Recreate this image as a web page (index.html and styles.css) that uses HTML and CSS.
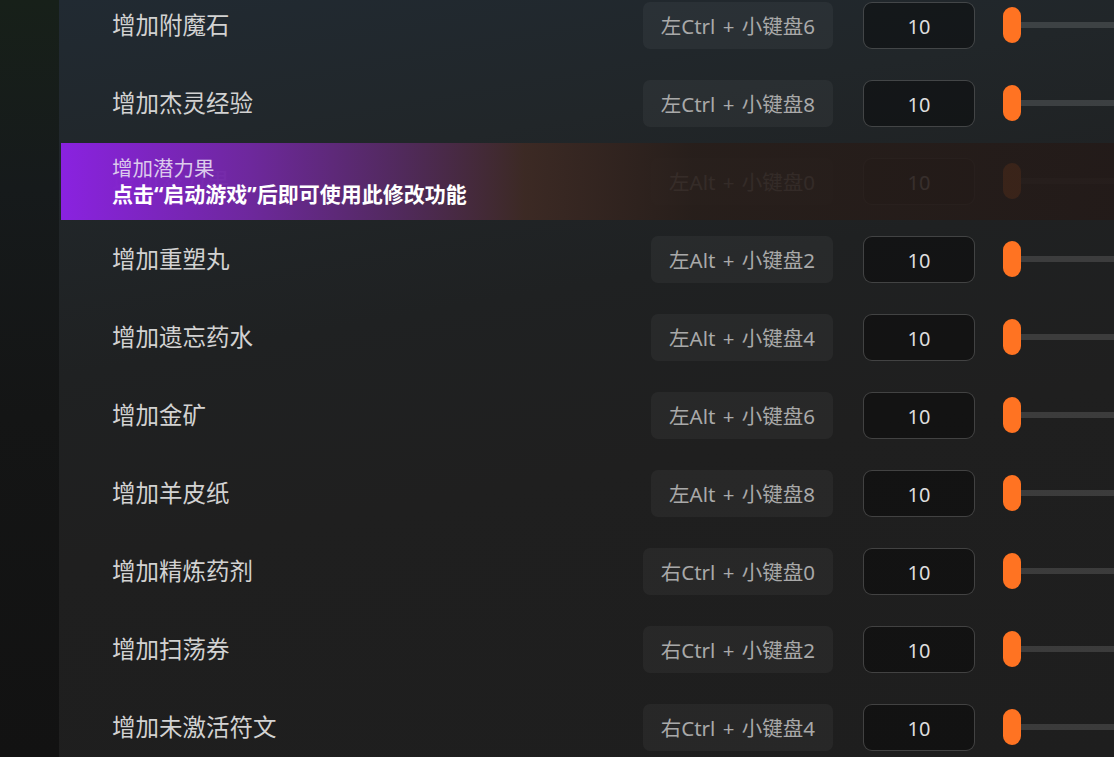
FILE: index.html
```html
<!DOCTYPE html>
<html lang="zh-CN">
<head>
<meta charset="utf-8">
<title>修改器</title>
<link rel="stylesheet" href="styles.css">
</head>
<body>
<div class="app">
  <div class="side"></div>
  <div class="panel">
    <div class="list">
      <div class="row">
        <div class="name">增加附魔石</div>
        <div class="hotkey">左Ctrl + 小键盘6</div>
        <div class="num">10</div>
        <div class="slider"><span class="thumb"></span><span class="track"></span></div>
      </div>
      <div class="row">
        <div class="name">增加杰灵经验</div>
        <div class="hotkey">左Ctrl + 小键盘8</div>
        <div class="num">10</div>
        <div class="slider"><span class="thumb"></span><span class="track"></span></div>
      </div>
      <div class="row">
        <div class="name">增加潜力果</div>
        <div class="hotkey">左Alt + 小键盘0</div>
        <div class="num">10</div>
        <div class="slider"><span class="thumb"></span><span class="track"></span></div>
        <div class="locked">
          <div class="locked-title">增加潜力果</div>
          <div class="locked-tip">点击“启动游戏”后即可使用此修改功能</div>
        </div>
      </div>
      <div class="row">
        <div class="name">增加重塑丸</div>
        <div class="hotkey">左Alt + 小键盘2</div>
        <div class="num">10</div>
        <div class="slider"><span class="thumb"></span><span class="track"></span></div>
      </div>
      <div class="row">
        <div class="name">增加遗忘药水</div>
        <div class="hotkey">左Alt + 小键盘4</div>
        <div class="num">10</div>
        <div class="slider"><span class="thumb"></span><span class="track"></span></div>
      </div>
      <div class="row">
        <div class="name">增加金矿</div>
        <div class="hotkey">左Alt + 小键盘6</div>
        <div class="num">10</div>
        <div class="slider"><span class="thumb"></span><span class="track"></span></div>
      </div>
      <div class="row">
        <div class="name">增加羊皮纸</div>
        <div class="hotkey">左Alt + 小键盘8</div>
        <div class="num">10</div>
        <div class="slider"><span class="thumb"></span><span class="track"></span></div>
      </div>
      <div class="row">
        <div class="name">增加精炼药剂</div>
        <div class="hotkey">右Ctrl + 小键盘0</div>
        <div class="num">10</div>
        <div class="slider"><span class="thumb"></span><span class="track"></span></div>
      </div>
      <div class="row">
        <div class="name">增加扫荡券</div>
        <div class="hotkey">右Ctrl + 小键盘2</div>
        <div class="num">10</div>
        <div class="slider"><span class="thumb"></span><span class="track"></span></div>
      </div>
      <div class="row">
        <div class="name">增加未激活符文</div>
        <div class="hotkey">右Ctrl + 小键盘4</div>
        <div class="num">10</div>
        <div class="slider"><span class="thumb"></span><span class="track"></span></div>
      </div>
    </div>
  </div>
</div>
</body>
</html>
```
FILE: styles.css
```css
html, body {
  margin: 0;
  padding: 0;
  width: 1114px;
  height: 757px;
  overflow: hidden;
  background: #131313;
  font-family: "Noto Sans", "Noto Sans CJK SC", sans-serif;
}

.app {
  display: flex;
  height: 757px;
}

.side {
  width: 59px;
  flex: none;
  background: linear-gradient(180deg, #172019 0%, #161a1b 25%, #141515 55%, #121212 100%);
}

.panel {
  flex: 1;
  min-width: 0;
  overflow: hidden;
  background: linear-gradient(170deg, #212a32 0%, #212629 22%, #1f2122 40%, #1f1f1f 60%, #1e1e1e 100%);
}

.list {
  margin-top: -14px;
  display: flex;
  flex-direction: column;
}

.row {
  position: relative;
  height: 78px;
  display: flex;
  align-items: center;
  padding-left: 53px;
}

.name {
  flex: 1;
  font-family: "Noto Sans CJK SC", sans-serif;
  font-size: 23.5px;
  color: #d2d2d2;
  margin-top: -2px;
}

.hotkey {
  height: 47px;
  padding: 0 18px;
  display: flex;
  align-items: center;
  border-radius: 7px;
  background: rgba(255, 255, 255, 0.045);
  color: #a9a9a9;
  font-size: 20.5px;
  word-spacing: 2px;
  white-space: nowrap;
  flex: none;
}

.num {
  margin-left: 30px;
  width: 110px;
  height: 43px;
  border: 1px solid rgba(255, 255, 255, 0.2);
  border-radius: 9px;
  background: rgba(0, 0, 0, 0.38);
  color: #dedede;
  font-size: 20px;
  display: flex;
  align-items: center;
  justify-content: center;
  padding-top: 2px;
  flex: none;
}

.slider {
  margin-left: 28px;
  width: 111px;
  flex: none;
  display: flex;
  align-items: center;
}

.thumb {
  width: 18px;
  height: 36px;
  border-radius: 9px;
  background: #ff7322;
  flex: none;
}

.track {
  flex: 1;
  height: 6px;
  background: rgba(255, 255, 255, 0.13);
}

.locked {
  position: absolute;
  left: 2px;
  right: 0;
  top: 1px;
  height: 77px;
  padding-left: 51px;
  display: flex;
  flex-direction: column;
  justify-content: center;
  background: linear-gradient(90deg,
    rgba(138, 34, 224, 1) 0%,
    rgba(112, 40, 160, 0.97) 18%,
    rgba(84, 42, 96, 0.95) 32%,
    rgba(62, 42, 36, 0.93) 44%,
    rgba(40, 30, 26, 0.9) 60%,
    rgba(35, 26, 24, 0.9) 100%);
}

.locked-title {
  font-size: 20.5px;
  line-height: 26px;
  color: #dccbec;
}

.locked-tip {
  font-size: 21px;
  line-height: 27px;
  font-weight: 700;
  color: #ffffff;
}
```
